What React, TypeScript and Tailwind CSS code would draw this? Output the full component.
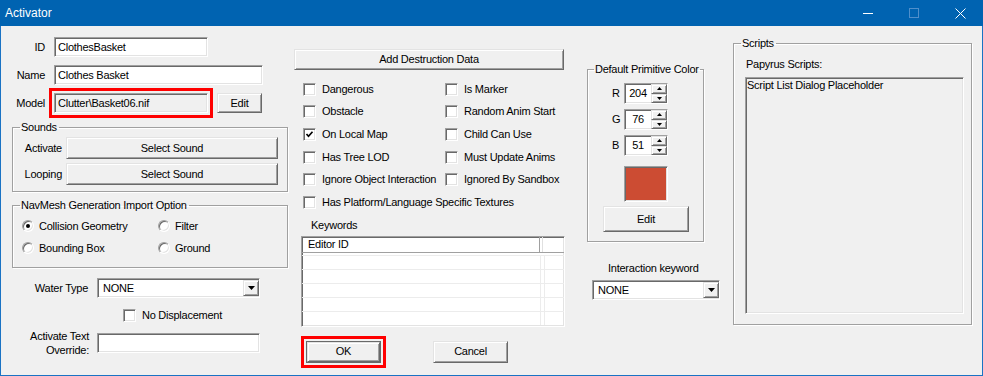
import React from 'react';

const SUNKEN =
  'border border-t-[#a0a0a0] border-l-[#a0a0a0] border-b-white border-r-white shadow-[inset_1px_1px_0_#696969,inset_-1px_-1px_0_#e3e3e3]';
const RAISED =
  'border border-t-[#e3e3e3] border-l-[#e3e3e3] border-b-[#696969] border-r-[#696969] shadow-[inset_1px_1px_0_#fff,inset_-1px_-1px_0_#a0a0a0]';
const GROUP = 'border border-[#a0a0a0] shadow-[inset_1px_1px_0_#fff,1px_1px_0_#fff]';

function Btn({ children, className = '' }: { children: React.ReactNode; className?: string }) {
  return <div className={`${RAISED} bg-[#f0f0f0] flex items-center justify-center ${className}`}>{children}</div>;
}

function TextBox({ value = '', className = '' }: { value?: string; className?: string }) {
  return (
    <div className={`${SUNKEN} bg-white h-[20px] flex items-center pl-[3px] whitespace-nowrap ${className}`}>{value}</div>
  );
}

function Check({ checked = false }: { checked?: boolean }) {
  return (
    <div className={`${SUNKEN} bg-white w-[13px] h-[13px] shrink-0 flex items-center justify-center`}>
      {checked && (
        <svg width="9" height="9" viewBox="0 0 9 9">
          <path d="M1.5 4 L3.5 6.2 L7.5 1.8" stroke="#000" strokeWidth="1.7" fill="none" />
        </svg>
      )}
    </div>
  );
}

function Radio({ checked = false }: { checked?: boolean }) {
  return (
    <div className="w-[12px] h-[12px] shrink-0 rounded-full bg-white border border-t-[#a0a0a0] border-l-[#a0a0a0] border-b-white border-r-white shadow-[inset_1px_1px_0_#696969,inset_-1px_-1px_0_#e3e3e3] flex items-center justify-center">
      {checked && <div className="w-[4px] h-[4px] rounded-full bg-black" />}
    </div>
  );
}

function Arrow({ up = false, w = 7, h = 4 }: { up?: boolean; w?: number; h?: number }) {
  return (
    <svg width={w} height={h} viewBox={`0 0 ${w} ${h}`}>
      <path d={up ? `M0 ${h}H${w}L${w / 2} 0z` : `M0 0H${w}L${w / 2} ${h}z`} fill="#000" />
    </svg>
  );
}

function Combo({ className = '' }: { className?: string }) {
  return (
    <div className={`${SUNKEN} bg-white h-[20px] flex items-center ${className}`}>
      <span className="flex-1 pl-[5px]">NONE</span>
      <div className={`${RAISED} bg-[#f0f0f0] w-[16px] h-[16px] flex items-center justify-center`}>
        <Arrow />
      </div>
    </div>
  );
}

function Spin({ label, value }: { label: string; value: string }) {
  return (
    <div className="flex items-center pl-[24px]">
      <span className="w-[12px]">{label}</span>
      <div className={`${SUNKEN} bg-white w-[44px] h-[21px] flex`}>
        <div className="flex-1 flex items-center justify-center">{value}</div>
        <div className="w-[16px] flex flex-col">
          <div className={`${RAISED} bg-[#f0f0f0] flex-1 flex items-center justify-center`}>
            <Arrow up w={5} h={3} />
          </div>
          <div className={`${RAISED} bg-[#f0f0f0] flex-1 flex items-center justify-center`}>
            <Arrow w={5} h={3} />
          </div>
        </div>
      </div>
    </div>
  );
}

const flags: [string, boolean][] = [
  ['Dangerous', false],
  ['Is Marker', false],
  ['Obstacle', false],
  ['Random Anim Start', false],
  ['On Local Map', true],
  ['Child Can Use', false],
  ['Has Tree LOD', false],
  ['Must Update Anims', false],
  ['Ignore Object Interaction', false],
  ['Ignored By Sandbox', false],
];

export default function App() {
  return (
    <div className="w-[983px] h-[376px] bg-[#1a73c4] flex flex-col overflow-hidden font-['Liberation_Sans',Arial,sans-serif] text-[11px] leading-[13px] tracking-[-0.25px] text-black">
      {/* title bar */}
      <div className="h-[26px] bg-[#0063b1] flex items-center text-white text-[12px] tracking-normal">
        <span className="flex-1 pl-[5px]">Activator</span>
        <div className="w-[46px] h-[26px] flex items-center justify-center">
          <div className="w-[10px] h-px bg-white" />
        </div>
        <div className="w-[46px] h-[26px] flex items-center justify-center">
          <div className="w-[10px] h-[10px] border border-[#4f8fcb]" />
        </div>
        <div className="w-[46px] h-[26px] flex items-center justify-center">
          <svg width="11" height="11" viewBox="0 0 11 11">
            <path d="M0.5 0.5 L10.5 10.5 M10.5 0.5 L0.5 10.5" stroke="#fff" strokeWidth="1" />
          </svg>
        </div>
      </div>

      <div className="mx-[1px] mb-[1px] flex-1 bg-[#f0f0f0] flex items-start">
        {/* left column */}
        <div className="ml-[11px] w-[277px] flex flex-col">
          <div className="mt-[11px] flex items-center">
            <span className="w-[33px] text-right">ID</span>
            <TextBox className="ml-[9px] w-[154px]" value="ClothesBasket" />
          </div>
          <div className="mt-[8px] flex items-center">
            <span className="w-[33px] text-right">Name</span>
            <TextBox className="ml-[9px] w-[209px]" value="Clothes Basket" />
          </div>
          <div className="mt-[8px] flex items-center">
            <span className="w-[33px] text-right">Model</span>
            <div className="relative ml-[9px]">
              <TextBox className="w-[154px] !bg-[#f0f0f0]" value={'Clutter\\Basket06.nif'} />
              <div className="absolute -left-[5px] -top-[5px] -right-[5px] -bottom-[5px] border-[3px] border-[#ff0000]" />
            </div>
            <Btn className="ml-[9px] w-[45px] h-[20px]">Edit</Btn>
          </div>

          <fieldset className={`mt-[8px] w-[276px] pb-[6px] ${GROUP}`}>
            <legend className="ml-[7px] pl-[1px] pr-[2px] leading-[13px]">Sounds</legend>
            <div className="mt-[3px] flex items-center">
              <span className="w-[49px] text-right">Activate</span>
              <Btn className="ml-[4px] w-[212px] h-[22px]">Select Sound</Btn>
            </div>
            <div className="mt-[4px] flex items-center">
              <span className="w-[49px] text-right">Looping</span>
              <Btn className="ml-[4px] w-[212px] h-[22px]">Select Sound</Btn>
            </div>
          </fieldset>

          <fieldset className={`mt-[7px] w-[276px] pb-[12px] ${GROUP}`}>
            <legend className="ml-[7px] pl-[1px] pr-[2px] leading-[13px]">NavMesh Generation Import Option</legend>
            <div className="pt-[7px] pl-[9px] grid grid-cols-[136px_1fr] gap-y-[8px]">
              {[
                ['Collision Geometry', true],
                ['Filter', false],
                ['Bounding Box', false],
                ['Ground', false],
              ].map(([t, c]) => (
                <div key={t as string} className="h-[14px] flex items-center">
                  <Radio checked={c as boolean} />
                  <span className="ml-[5px]">{t as string}</span>
                </div>
              ))}
            </div>
          </fieldset>

          <div className="mt-[10px] flex items-center">
            <span className="w-[76px] text-right">Water Type</span>
            <Combo className="ml-[9px] w-[163px]" />
          </div>
          <div className="mt-[11px] pl-[111px] flex items-center">
            <Check />
            <span className="ml-[6px]">No Displacement</span>
          </div>
          <div className="mt-[7px] flex items-center">
            <span className="w-[77px] text-right leading-[14px]">
              Activate Text
              <br />
              Override:
            </span>
            <TextBox className="ml-[8px] w-[163px]" />
          </div>
        </div>

        {/* middle column */}
        <div className="ml-[5px] w-[271px] flex flex-col">
          <Btn className="mt-[23px] w-[270px] h-[21px]">Add Destruction Data</Btn>
          <div className="mt-[8px] pl-[9px] grid grid-cols-[142px_1fr] auto-rows-[22.6px]">
            {flags.map(([t, c]) => (
              <div key={t} className="flex items-center whitespace-nowrap">
                <Check checked={c} />
                <span className="ml-[6px]">{t}</span>
              </div>
            ))}
            <div className="col-span-2 flex items-center whitespace-nowrap">
              <Check />
              <span className="ml-[6px]">Has Platform/Language Specific Textures</span>
            </div>
          </div>
          <div className="mt-[5px] pl-[17px]">Keywords</div>
          <div className={`mt-[4px] ml-[7px] w-[264px] h-[91px] bg-white overflow-hidden ${SUNKEN}`}>
            <div className="h-[16px] flex border-b border-[#a0a0a0]">
              <div className="w-[238px] border-r border-[#a0a0a0] flex items-center pl-[6px]">Editor ID</div>
              <div className="w-[3px] border-r border-[#e0e0e0]" />
            </div>
            <div className="mt-[2px]">
              {[0, 1, 2, 3, 4].map((i) => (
                <div key={i} className="h-[14px] flex border-t border-[#ececec]">
                  <div className="w-[239px] border-r border-[#ececec]" />
                  <div className="w-[4px] border-r border-[#ececec]" />
                </div>
              ))}
            </div>
          </div>
          <div className="mt-[14px] flex">
            <div className="relative ml-[12px]">
              <div className="w-[75px] h-[22px] border border-[#696969] flex">
                <Btn className="flex-1">OK</Btn>
              </div>
              <div className="absolute -left-[5px] -top-[5px] -right-[5px] -bottom-[5px] border-[3px] border-[#ff0000]" />
            </div>
            <Btn className="ml-[52px] w-[75px] h-[22px]">Cancel</Btn>
          </div>
        </div>

        {/* colour column */}
        <div className="ml-[22px] w-[133px] flex flex-col">
          <fieldset className={`mt-[37px] w-[117px] pb-[9px] ${GROUP}`}>
            <legend className="ml-[6px] pl-[1px] pr-[1px] leading-[13px] whitespace-nowrap">Default Primitive Color</legend>
            <div className="mt-[7px]">
              <Spin label="R" value="204" />
            </div>
            <div className="mt-[5px]">
              <Spin label="G" value="76" />
            </div>
            <div className="mt-[5px]">
              <Spin label="B" value="51" />
            </div>
            <div className={`mt-[10px] ml-[36px] w-[44px] h-[36px] bg-[#cc4c33] ${SUNKEN}`} />
            <Btn className="mt-[4px] ml-[15px] w-[86px] h-[26px]">Edit</Btn>
          </fieldset>
          <div className="mt-[20px] ml-[21px] whitespace-nowrap">Interaction keyword</div>
          <Combo className="mt-[5px] ml-[5px] w-[128px]" />
        </div>

        {/* scripts column */}
        <fieldset className={`ml-[13px] mt-[11px] w-[239px] pb-[10px] ${GROUP}`}>
          <legend className="ml-[7px] pl-[1px] pr-[2px] leading-[13px]">Scripts</legend>
          <div className="mt-[8px] pl-[12px]">Papyrus Scripts:</div>
          <div className={`mt-[6px] ml-[11px] w-[219px] h-[237px] bg-[#f0f0f0] pl-[1px] pt-[1px] ${SUNKEN}`}>
            Script List Dialog Placeholder
          </div>
        </fieldset>
      </div>
    </div>
  );
}
